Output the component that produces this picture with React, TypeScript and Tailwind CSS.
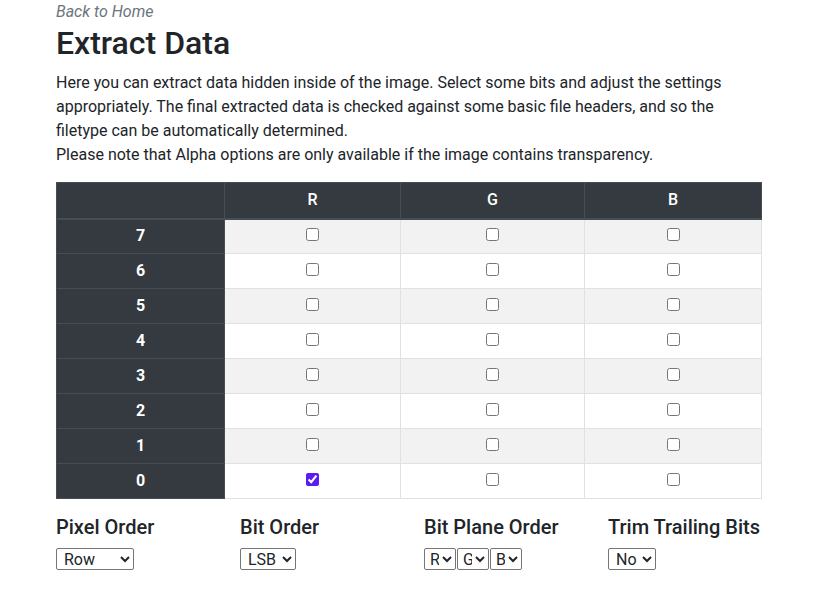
import React from "react";

const bits = [7, 6, 5, 4, 3, 2, 1, 0];

export default function App() {
  return (
    <div className="bg-white min-h-[591px] text-[#212529]" style={{ fontFamily: "Roboto, 'Liberation Sans', sans-serif" }}>
      <div className="w-[706px] ml-[56px]">
        <a className="block italic text-[16px] leading-[24px] text-[#6c757d]">Back to Home</a>
        <h2 className="text-[32px] leading-[38px] font-medium mb-[9px]">Extract Data</h2>
        <p className="text-[16px] leading-[24px] mb-[15px]">
          Here you can extract data hidden inside of the image. Select some bits and adjust the settings appropriately. The final extracted data is checked against some basic file headers, and so the filetype can be automatically determined.
          <br />
          Please note that Alpha options are only available if the image contains transparency.
        </p>
        <table className="w-[705px] border-collapse table-fixed text-[16px]">
          <colgroup>
            <col className="w-[168px]" />
            <col className="w-[176px]" />
            <col className="w-[184px]" />
            <col className="w-[177px]" />
          </colgroup>
          <thead>
            <tr className="h-[36px] bg-[#343a40] text-white">
              <th className="border border-[#454d55] border-b-2 font-medium"></th>
              <th className="border border-[#454d55] border-b-2 font-medium">R</th>
              <th className="border border-[#454d55] border-b-2 font-medium">G</th>
              <th className="border border-[#454d55] border-b-2 font-medium">B</th>
            </tr>
          </thead>
          <tbody>
            {bits.map((b, i) => (
              <tr key={b} className={"h-[35px] " + (i % 2 === 0 ? "bg-[#f2f2f2]" : "bg-white")}>
                <th className="bg-[#343a40] text-white border border-[#454d55] font-bold">{b}</th>
                {["R", "G", "B"].map((c) => (
                  <td key={c} className="border border-[#dee2e6] text-center align-middle">
                    <input
                      type="checkbox"
                      defaultChecked={b === 0 && c === "R"}
                      className="block mx-auto mb-[3px] w-[13px] h-[13px] accent-[#5a1cf2]"
                    />
                  </td>
                ))}
              </tr>
            ))}
          </tbody>
        </table>
        <div className="grid grid-cols-[184px_184px_184px_154px] mt-[16px]">
          <div>
            <h5 className="text-[20px] leading-[24px] font-medium mb-[9px]">Pixel Order</h5>
            <select className="w-[78px] h-[22px] border border-[#767676] rounded-[2px] text-[16px] pl-[3px] bg-white" defaultValue="Row">
              <option>Row</option>
              <option>Column</option>
            </select>
          </div>
          <div>
            <h5 className="text-[20px] leading-[24px] font-medium mb-[9px]">Bit Order</h5>
            <select className="w-[56px] h-[22px] border border-[#767676] rounded-[2px] text-[16px] pl-[3px] bg-white" defaultValue="LSB">
              <option>LSB</option>
              <option>MSB</option>
            </select>
          </div>
          <div>
            <h5 className="text-[20px] leading-[24px] font-medium mb-[9px] whitespace-nowrap">Bit Plane Order</h5>
            <div className="flex gap-[1px]">
              {["R", "G", "B"].map((c) => (
                <select key={c} className="w-[32px] h-[22px] border border-[#767676] rounded-[2px] text-[16px] pl-[1px] bg-white" defaultValue={c}>
                  <option>R</option>
                  <option>G</option>
                  <option>B</option>
                </select>
              ))}
            </div>
          </div>
          <div>
            <h5 className="text-[20px] leading-[24px] font-medium mb-[9px] whitespace-nowrap">Trim Trailing Bits</h5>
            <select className="w-[48px] h-[22px] border border-[#767676] rounded-[2px] text-[16px] pl-[3px] bg-white" defaultValue="No">
              <option>No</option>
              <option>Yes</option>
            </select>
          </div>
        </div>
      </div>
    </div>
  );
}
